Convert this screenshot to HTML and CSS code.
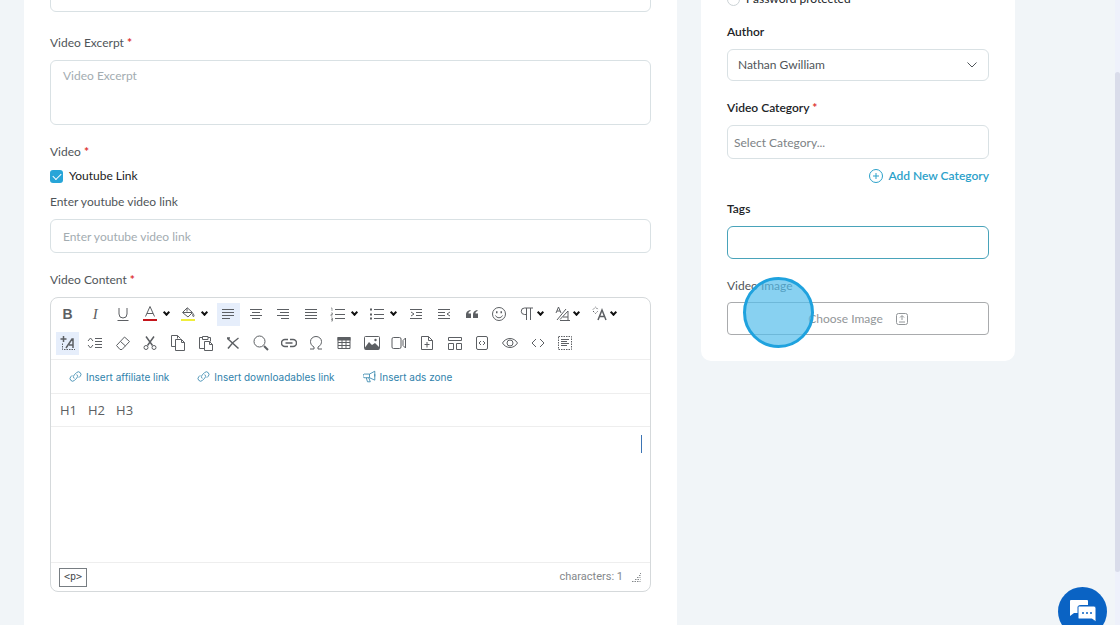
FILE: index.html
```html
<!DOCTYPE html>
<html lang="en">
<head>
  <meta charset="utf-8">
  <title>Add Video</title>
  <link rel="stylesheet" href="styles.css">
</head>

<body>
  <div class="page">
    <form class="content">
      <div class="card main-card">
        <input class="field title-field" type="text" aria-label="Video Title">

        <div class="group">
          <label for="excerpt">Video Excerpt <span class="req">*</span></label>
          <textarea id="excerpt" class="field" placeholder="Video Excerpt"></textarea>
        </div>

        <div class="group">
          <span class="label check-title">Video <span class="req">*</span></span>
          <div class="check">
            <input type="checkbox" id="youtube" checked>
            <label for="youtube">Youtube Link</label>
          </div>
          <label for="link">Enter youtube video link</label>
          <input id="link" class="field" type="text" placeholder="Enter youtube video link">
        </div>

        <div class="group">
          <span class="label">Video Content <span class="req">*</span></span>
          <div class="editor">
            <div class="toolbar">
              <div class="row row-one">
                <button type="button" title="Bold" class="tool bold">B</button>
                <button type="button" title="Italic" class="tool italic">I</button>
                <button type="button" title="Underline" class="tool"><svg viewBox="0 0 16 16"><path d="M4 2v6a4 4 0 0 0 8 0V2M2.500 14.500h11"/></svg></button>
                <button type="button" title="Text color" class="tool drop"><svg viewBox="0 0 16 16"><path d="M3.500 10.500 8 .5l4.500 10M5 7.500h6"/><path class="red" d="M1 14h14"/></svg><i class="caret"></i></button>
                <button type="button" title="Background color" class="tool drop"><svg viewBox="0 0 16 16"><path d="M7 1.500 12.500 6.500 8 11 2.500 6.500 7 2v3.500M3 6.500h9M13 7.500c1 1.500 1.500 3 .5 3s-1-1.500-.5-3z"/><path class="yellow" d="M1 14h14"/></svg><i class="caret"></i></button>
                <button type="button" title="Align left" class="tool on"><svg viewBox="0 0 16 16"><path d="M2 3.500h12M2 6.500h12M2 9.500h12M2 12.500h8"/></svg></button>
                <button type="button" title="Align center" class="tool"><svg viewBox="0 0 16 16"><path d="M2 3.500h12M4 6.500h8M2 9.500h12M4 12.500h8"/></svg></button>
                <button type="button" title="Align right" class="tool"><svg viewBox="0 0 16 16"><path d="M2 3.500h12M5 6.500h9M2 9.500h12M6 12.500h8"/></svg></button>
                <button type="button" title="Justify" class="tool"><svg viewBox="0 0 16 16"><path d="M2 3.500h12M2 6.500h12M2 9.500h12M2 12.500h12"/></svg></button>
                <button type="button" title="Numbered list" class="tool drop"><svg viewBox="0 0 16 16"><path d="M5 3.500h10M5 8.500h10M5 12.500h10"/><path class="thin" d="M1 2h1v3M1 7h1.500v1.500H1V10h1.500M1 12h1.500v3H1M1 13.500h1.500"/></svg><i class="caret"></i></button>
                <button type="button" title="Bulleted list" class="tool drop"><svg viewBox="0 0 16 16"><path d="M5 3.500h10M5 8.500h10M5 12.500h10"/><path class="bold-line" d="M1 3.500h2M1 8.500h2M1 12.500h2"/></svg><i class="caret"></i></button>
                <button type="button" title="Increase indent" class="tool"><svg viewBox="0 0 16 16"><path d="M2 3.500h12M8 6.500h6M8 9.500h6M2 12.500h12M3 6l3 2-3 2"/></svg></button>
                <button type="button" title="Decrease indent" class="tool"><svg viewBox="0 0 16 16"><path d="M2 3.500h12M2 6.500h7M2 9.500h7M2 12.500h12M14 6l-3 2 3 2"/></svg></button>
                <button type="button" title="Quote" class="tool"><svg viewBox="0 0 16 16"><path class="solid" d="M6.500 4C3 4.500 2 6.500 2 9v3h5V7.500H4.500C4.500 6 5 5.500 6.500 5zM13.500 4C10 4.500 9 6.500 9 9v3h5V7.500h-2.500c0-1.500.5-2 2-2.500z"/></svg></button>
                <button type="button" title="Emoticons" class="tool"><svg viewBox="0 0 16 16"><circle cx="8" cy="8" r="6.500"/><path d="M4.500 9.500c1.500 3 5.500 3 7 0"/><path class="bold-line" d="M5 6.200h1.500M9.500 6.200H11"/></svg></button>
                <button type="button" title="Paragraph format" class="tool drop tight"><svg viewBox="0 0 16 16"><path d="M7 8.500H5.500a3 3 0 0 1 0-6.500H14M7.500 2v12M11.500 2v12"/></svg><i class="caret"></i></button>
                <button type="button" title="Inline style" class="tool drop tight"><svg viewBox="0 0 16 16"><path d="M1 7 3.500 1 6 7M2 5h3M2 14 11 3M5 13.500 13 5v9M8 11h5M5 14.500h10"/></svg><i class="caret"></i></button>
                <button type="button" title="Font size" class="tool drop tight"><svg viewBox="0 0 16 16"><path class="heavy" d="m6 14 4-10 4 10M7.500 10.500h5"/><path d="M1 3.500 3.500 1 6 3.500M1 5l2.500 2.500L6 5" stroke-dasharray="1.500 1"/></svg><i class="caret"></i></button>
              </div>
              <div class="row row-two">
                <button type="button" title="Text formatting" class="tool on"><svg viewBox="0 0 16 16"><path class="heavy" d="M.5 4h6M3.500 1v6M6 13l6-9h1v9M9 10h4"/><path d="M2.500 8.500v6H15" stroke-dasharray="1.500 1"/></svg></button>
                <button type="button" title="Line height" class="tool"><svg viewBox="0 0 16 16"><path d="M1 6l2.500-3L6 6M1 10l2.500 3L6 10M8 3.500h7M8 6.500h7M8 9.500h7M8 12.500h7"/></svg></button>
                <button type="button" title="Clear formatting" class="tool"><svg viewBox="0 0 16 16"><path d="m1.500 10.500 8-8.500 5 4.500-7.500 8H5zM5.500 6.500l5 4.500"/></svg></button>
                <button type="button" title="Cut" class="tool"><svg viewBox="0 0 16 16"><path class="heavy" d="m4 1.500 6.500 9M12 1.500l-6.500 9"/><circle cx="4" cy="12.500" r="2"/><circle cx="12" cy="12.500" r="2"/></svg></button>
                <button type="button" title="Copy" class="tool"><svg viewBox="0 0 16 16"><path d="M5.500 11.500h-4v-11h6l3 3M5.500 4.500h6l3 3v8h-9zM11.500 4.500v3h3M7.500 .5v3"/></svg></button>
                <button type="button" title="Paste" class="tool"><svg viewBox="0 0 16 16"><path d="M6.500 13.500h-5v-11h3M10 2.500h2.500v4M4.500 1.500h5.500v3H4.500zM6.500 6.500h5l3 3v6h-8zM11.500 6.500v3h3"/></svg></button>
                <button type="button" title="Delete" class="tool"><svg viewBox="0 0 16 16"><path class="heavy" d="m2.500 3.500 11 10M13.500 3C9 6 6 9 3 13.500M2 3h3"/></svg></button>
                <button type="button" title="Find" class="tool"><svg viewBox="0 0 16 16"><circle cx="6.500" cy="6.500" r="5.500"/><path class="bold-line" d="m11 11 4 4"/></svg></button>
                <button type="button" title="Insert link" class="tool"><svg viewBox="0 0 16 16"><path class="heavy" d="M7 4.500H4a3.500 3.500 0 0 0 0 7h3M9 4.500h3a3.500 3.500 0 0 1 0 7H9M4.500 8h7"/></svg></button>
                <button type="button" title="Special characters" class="tool"><svg viewBox="0 0 16 16"><path d="M2 14h4v-2C3 10.500 2.500 8 2.500 6.500a5.500 5 0 0 1 11 0c0 1.500-.5 4-3.500 5.500v2h4"/></svg></button>
                <button type="button" title="Insert table" class="tool"><svg viewBox="0 0 16 16"><path class="solid" d="M1.500 2h13v3.500h-13z"/><path d="M2 2.500h12v11H2zM6 5v8M10 5v8M2 7.500h12M2 10.500h12"/></svg></button>
                <button type="button" title="Insert image" class="tool"><svg viewBox="0 0 16 16"><rect x=".5" y="1.500" width="15" height="13" rx="1"/><path class="solid" d="M1 12.500 5 7l3 3 3-2 4 4v2.500H1z"/><circle class="solid" cx="11.500" cy="5" r="1.200"/></svg></button>
                <button type="button" title="Insert video" class="tool"><svg viewBox="0 0 16 16"><rect x="1" y="2.500" width="9" height="11" rx="1.500"/><path d="M12 5.500 14.500 3v10L12 10.500z"/></svg></button>
                <button type="button" title="Upload file" class="tool"><svg viewBox="0 0 16 16"><path d="M2.500 1.500h7l4 4v9h-11zM9.500 1.500v4h4M8 7v5.500M5.500 9.500h5"/></svg></button>
                <button type="button" title="Templates" class="tool"><svg viewBox="0 0 16 16"><path d="M1.500 2.500h13v3h-13zM1.500 8.500h5v6h-5zM9.500 8.500h5v6h-5z"/></svg></button>
                <button type="button" title="Embed" class="tool"><svg viewBox="0 0 16 16"><rect x="2.500" y="1.500" width="11" height="13" rx="1.500"/><path d="m7 6-2 2 2 2M9 6l2 2-2 2"/></svg></button>
                <button type="button" title="Preview" class="tool"><svg viewBox="0 0 16 16"><path d="M.5 8C4 2 12 2 15.500 8 12 14 4 14 .5 8z"/><circle cx="8" cy="8" r="3"/></svg></button>
                <button type="button" title="Code view" class="tool"><svg viewBox="0 0 16 16"><path d="M6 4 2 8l4 4M10 4l4 4-4 4"/></svg></button>
                <button type="button" title="Select all" class="tool"><svg viewBox="0 0 16 16"><rect x="1.500" y="1.500" width="13" height="13" stroke-dasharray="1.500 1"/><path d="M4 4.500h8M4 6.500h6M4 8.500h8M4 10.500h6"/></svg></button>
              </div>
            </div>

            <div class="inserts">
              <a href="#"><svg viewBox="0 0 16 16"><path d="M6.500 10.500a3 3 0 0 1 0-4.500l3-3a3.200 3.200 0 0 1 4.500 4.500L12 9.500M9.500 5.500a3 3 0 0 1 0 4.500l-3 3A3.200 3.200 0 0 1 2 8.500L4 6.500"/></svg>Insert affiliate link</a>
              <a href="#"><svg viewBox="0 0 16 16"><path d="M6.500 10.500a3 3 0 0 1 0-4.500l3-3a3.200 3.200 0 0 1 4.500 4.500L12 9.500M9.500 5.500a3 3 0 0 1 0 4.500l-3 3A3.200 3.200 0 0 1 2 8.500L4 6.500"/></svg>Insert downloadables link</a>
              <a href="#"><svg viewBox="0 0 16 16"><path d="M1.500 5H8l6.500-3.500v11L8 9.500H3A2.200 2.200 0 0 1 1.500 5zM8 5v4.500M4 9.500 5.500 14.500H9L7 9.500M14.500 5v3"/></svg>Insert ads zone</a>
            </div>

            <div class="headings">
              <button type="button">H1</button>
              <button type="button">H2</button>
              <button type="button">H3</button>
            </div>

            <div class="text-area" contenteditable="true"><span class="text-cursor"></span></div>

            <div class="status">
              <code>&lt;p&gt;</code>
              <span class="count">characters: 1</span>
              <svg class="grip" viewBox="0 0 10 10"><path d="M1 9.500h8.500M4 7.500h5.500M6 5.500h3.500M8 3.500h1.500M9 1.500h1" stroke-dasharray="1.500 1"/></svg>
            </div>
          </div>
        </div>
      </div>

      <div class="card side-card">
        <div class="radio">
          <input type="radio" id="protected">
          <label for="protected">Password protected</label>
        </div>

        <div class="group">
          <label for="author">Author</label>
          <div class="select">
            <select id="author" class="field">
              <option>Nathan Gwilliam</option>
            </select>
            <svg viewBox="0 0 10 6"><path d="m.5.5 4.500 4.500L9.500.5"/></svg>
          </div>
        </div>

        <div class="group">
          <label for="category">Video Category <span class="req">*</span></label>
          <input id="category" class="field" type="text" placeholder="Select Category...">
          <a href="#" class="add"><svg viewBox="0 0 16 16"><circle cx="8" cy="8" r="6.500"/><path d="M8 5v6M5 8h6"/></svg>Add New Category</a>
        </div>

        <div class="group tags-group">
          <label for="tags">Tags</label>
          <input id="tags" class="field" type="text">
        </div>

        <div class="group image-group">
          <span class="label">Video Image</span>
          <button type="button" class="choose">Choose Image
            <svg viewBox="0 0 12 12"><rect x=".5" y=".5" width="11" height="11" rx="2"/><path d="M6 7V3M4 4.500 6 2.500l2 2M3 9h6"/></svg>
          </button>
          <span class="click-spot"></span>
        </div>
      </div>
    </form>

    <div class="scrollbar"><div class="thumb"></div></div>
  </div>

  <button type="button" class="chat" aria-label="Chat">
    <svg viewBox="0 0 28 26"><path class="back" d="M2 1h16q1 0 1 1v4h-7q-3 0-3 3v5l-4 0-4 3V2q0-1 1-1z"/><path class="front" d="M10 7h15q2 0 2 2v14l-4-3H10q-1 0-1-1V8q0-1 1-1z"/><circle cx="14" cy="14" r="1"/><circle cx="18" cy="14" r="1"/><circle cx="22" cy="14" r="1"/></svg>
  </button>
</body>
</html>
```
FILE: styles.css
```css
* {
  box-sizing: border-box;
}
body {
  margin: 0;
  height: 100vh;
  overflow: hidden;
  background-color: #f1f5f8;
  font-family: Lato, sans-serif;
  font-size: 12px;
  line-height: 16px;
  color: #4f5559;
}
input, textarea, select, button {
  font-family: inherit;
  font-size: inherit;
  line-height: inherit;
}
svg {
  fill: none;
  stroke: currentColor;
  flex: none;
}
a {
  text-decoration: none;
}
.page {
  display: flex;
  height: 100vh;
}
/* form is scrolled a little past its first fields */
.content {
  flex: 1;
  display: grid;
  grid-template-columns: minmax(0, 1fr) 314px;
  gap: 24px;
  align-items: start;
  padding: 0 100px 0 24px;
  margin-top: -22px;
}
.card {
  background-color: #fff;
  padding: 0 26px 26px;
}
.main-card {
  padding-bottom: 60px;
}
.side-card {
  border-radius: 0 0 10px 10px;
  padding-top: 13px;
}

/* fields */
.group {
  position: relative;
  margin-top: 19px;
}
.title-field + .group {
  margin-top: 23px;
}
.radio + .group {
  margin-top: 17px;
}
.group > label, .label {
  display: block;
  margin-bottom: 9px;
}
.group > .check-title {
  margin-bottom: 8px;
}
.req {
  color: #dd3333;
  font-weight: bold;
}
.field {
  display: block;
  width: 100%;
  height: 34px;
  padding: 0 12px;
  border: 1px solid #d9e1e4;
  border-radius: 6px;
  background-color: #fff;
  color: #4f5559;
  outline: none;
}
.field::placeholder {
  color: #a3acb1;
}
textarea.field {
  height: 65px;
  padding: 7px 12px;
  resize: none;
}
.check {
  display: flex;
  align-items: center;
  gap: 6px;
  margin-bottom: 10px;
  color: #222;
}
.check input {
  appearance: none;
  position: relative;
  width: 13px;
  height: 13px;
  margin: 0;
  border-radius: 3px;
  background-color: #27a5d8;
}
.check input::after {
  content: "";
  position: absolute;
  left: 3px;
  top: 3px;
  width: 7px;
  height: 4px;
  border-left: 1px solid #fff;
  border-bottom: 1px solid #fff;
  transform: rotate(-45deg);
}

/* editor */
.editor {
  border: 1px solid #d5d9db;
  border-radius: 8px;
  color: #5c5f63;
}
.toolbar {
  padding: 4px 5px;
  border-bottom: 1px solid #eeeeee;
}
.row {
  display: flex;
  justify-content: space-between;
  align-items: center;
  height: 24px;
}
.row-one {
  max-width: 565px;
}
.row-two {
  max-width: 521px;
  margin-top: 5px;
}
.tool {
  display: flex;
  align-items: center;
  justify-content: center;
  width: 23px;
  height: 23px;
  padding: 0;
  border: 0;
  background: none;
  color: #5c5f63;
}
.tool svg {
  width: 16px;
  height: 16px;
}
.drop {
  width: 34px;
  gap: 4px;
}
.tight {
  width: 32px;
  gap: 1px;
}
.on {
  background-color: #e6eefb;
}
.bold {
  font: bold 14px "Liberation Sans", sans-serif;
}
.italic {
  font: italic 15px "Liberation Serif", serif;
}
.caret {
  width: 5px;
  height: 5px;
  margin: -4px 2px 0;
  border-right: 2px solid #111;
  border-bottom: 2px solid #111;
  transform: rotate(45deg);
}
.red {
  stroke: #c4161c;
  stroke-width: 2;
}
.yellow {
  stroke: #f0ee3c;
  stroke-width: 2;
}
.thin {
  stroke-width: .6;
}
.heavy {
  stroke-width: 1.5;
}
.bold-line {
  stroke-width: 2;
}
.solid {
  fill: currentColor;
  stroke: none;
}
.inserts {
  display: flex;
  align-items: center;
  gap: 28px;
  height: 34px;
  padding-left: 18px;
  border-bottom: 1px solid #eeeeee;
  font-family: Inter, sans-serif;
  font-size: 10px;
}
.inserts a {
  display: flex;
  align-items: center;
  gap: 4px;
  color: #2f82ab;
}
.inserts svg {
  width: 13px;
  height: 13px;
}
.headings {
  display: flex;
  align-items: center;
  gap: 11px;
  height: 33px;
  padding-left: 9px;
  border-bottom: 1px solid #eeeeee;
}
.headings button {
  padding: 0;
  border: 0;
  background: none;
  font-family: "Open Sans", sans-serif;
  font-size: 13px;
  color: #5c5f63;
}
.text-area {
  height: 135px;
  padding: 8px;
  outline: none;
}
.text-cursor {
  display: block;
  width: 1px;
  height: 18px;
  margin-left: auto;
  background-color: #3b74b4;
}
.status {
  display: flex;
  align-items: center;
  height: 29px;
  padding: 0 9px 0 8px;
  border-top: 1px solid #eeeeee;
  font-family: Roboto, sans-serif;
  font-size: 11px;
  color: #84888b;
}
.status code {
  height: 19px;
  padding: 0 4px;
  border: 1px solid #777d82;
  font-family: "DejaVu Sans Mono", monospace;
  font-size: 10px;
  color: #44484c;
}
.count {
  margin-left: auto;
}
.grip {
  width: 10px;
  height: 10px;
  margin-left: 8px;
}

/* right column */
.side-card label {
  color: #212427;
  font-weight: 600;
}
.side-card .radio label {
  font-weight: normal;
}
.radio {
  display: flex;
  align-items: center;
  gap: 6px;
}
.radio input {
  appearance: none;
  width: 13px;
  height: 13px;
  margin: 0;
  border: 1px solid #ccd3d6;
  border-radius: 50%;
}
.select {
  position: relative;
}
.select .field {
  appearance: none;
  height: 32px;
  padding: 0 10px;
}
.select svg {
  position: absolute;
  right: 12px;
  top: 13px;
  width: 10px;
  height: 6px;
}
#category {
  padding: 0 6px;
}
#category::placeholder {
  color: #7d8285;
}
.add {
  display: flex;
  align-items: center;
  justify-content: flex-end;
  gap: 4px;
  margin-top: 9px;
  color: #2ba1ca;
  font-weight: 600;
}
.add svg {
  width: 16px;
  height: 16px;
}
.tags-group {
  margin-top: 17px;
}
#tags {
  height: 33px;
  border-color: #49a3ba;
}
.image-group .label {
  margin-bottom: 8px;
}
.choose {
  display: flex;
  align-items: center;
  justify-content: center;
  gap: 13px;
  width: 100%;
  height: 33px;
  border: 1px solid #a9abad;
  border-radius: 4px;
  background-color: #fff;
  color: #929699;
}
.choose svg {
  width: 12px;
  height: 12px;
}
.click-spot {
  position: absolute;
  left: 16px;
  top: -1px;
  width: 71px;
  height: 71px;
  border: 3px solid #1fa2de;
  border-radius: 50%;
  background-color: rgba(85, 189, 235, .7);
}

.scrollbar {
  width: 5px;
  background-color: #eef1fb;
}
.thumb {
  height: 80%;
  margin-top: 72px;
  border-radius: 3px;
  background-color: #d9dcea;
}
.chat {
  position: fixed;
  right: 13px;
  bottom: -11px;
  width: 49px;
  height: 49px;
  padding: 0;
  border: 0;
  border-radius: 50%;
  background-color: #0a63c4;
}
.chat svg {
  width: 28px;
  height: 26px;
  margin-top: 5px;
  fill: #0a63c4;
  stroke: none;
}
.chat .back {
  fill: #fff;
}
.chat .front {
  fill: #fff;
  stroke: #0a63c4;
}
```
